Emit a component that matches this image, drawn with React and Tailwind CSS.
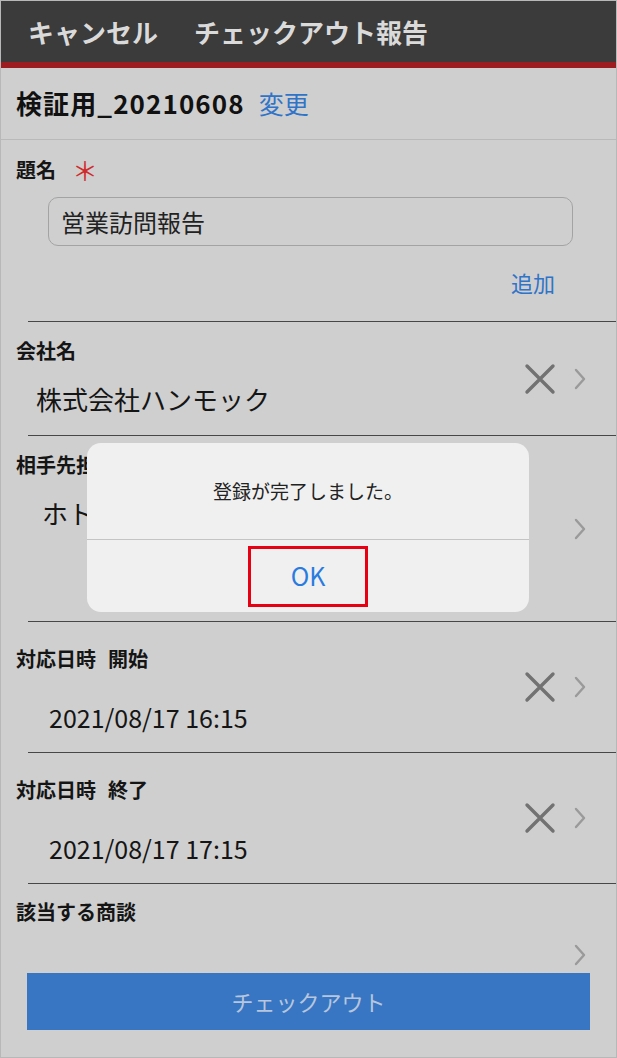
const FONT = { fontFamily: '"Noto Sans CJK JP", "Noto Sans", sans-serif' };

const ClearIcon = () => (
  <svg width="32" height="32" viewBox="0 0 32 32" className="shrink-0">
    <path d="M3 3 L29 29 M29 3 L3 29" stroke="#727272" strokeWidth="3.4" strokeLinecap="round" />
  </svg>
);

const Chevron = () => (
  <svg width="12" height="22" viewBox="0 0 12 22" className="shrink-0">
    <path d="M2 2 L10 11 L2 20" fill="none" stroke="#9a9a9a" strokeWidth="2.4" strokeLinecap="round" strokeLinejoin="round" />
  </svg>
);

const Divider = () => <div className="ml-[27px] h-px bg-[#474747]" />;

const FieldRow = ({ label, sub, value, valueSize = "text-[26px]", height, pt, gap, valueX, clear = true }) => (
  <div className={`flex items-center ${height}`}>
    <div className={`flex-1 self-start ${pt}`}>
      <p className="pl-[15px] text-[20px] font-bold leading-[26px] text-[#151515]">
        {label}
        {sub && <span className="ml-[12px]">{sub}</span>}
      </p>
      {value && (
        <p className={`${gap} ${valueX} ${valueSize} leading-[32px] text-[#151515]`}>{value}</p>
      )}
    </div>
    <div className="flex items-center gap-[18px] pr-[30px]">
      {clear && <ClearIcon />}
      <Chevron />
    </div>
  </div>
);

const App = () => {
  return (
    <div className="relative h-[1058px] w-[617px] overflow-hidden border border-[#b8b8b8] bg-[#cfcfcf]" style={FONT}>
      <header className="flex h-[61px] items-center gap-[36px] bg-[#3b3b3b] pl-[27px] text-[26px] font-bold text-[#dadada]">
        <span>キャンセル</span>
        <span>チェックアウト報告</span>
      </header>
      <div className="h-[6px] bg-[#9c1c20]" />

      <div className="flex h-[71px] items-start gap-[14px] pl-[15px] pt-[18px]">
        <span className="text-[26px] font-bold leading-[34px] tracking-[1.1px] text-[#111]">検証用_20210608</span>
        <span className="text-[25px] leading-[34px] text-[#2f74c8]">変更</span>
      </div>
      <div className="h-px bg-[#b9b9b9]" />

      <section className="h-[181px] pt-[17px]">
        <div className="flex items-center pl-[15px]">
          <span className="text-[20px] font-bold leading-[26px] text-[#151515]">題名</span>
          <span className="ml-[16px] text-[26px] leading-[26px] text-[#d12a2a]">＊</span>
        </div>
        <div className="ml-[47px] mt-[14px] flex h-[49px] w-[525px] items-center rounded-[10px] border border-[#a3a3a3] pl-[12px] text-[24px] text-[#222]">
          営業訪問報告
        </div>
        <div className="mt-[22px] flex justify-end pr-[61px]">
          <span className="text-[22px] leading-[28px] text-[#2f74c8]">追加</span>
        </div>
      </section>
      <Divider />

      <FieldRow label="会社名" value="株式会社ハンモック" height="h-[113px]" pt="pt-[16px]" gap="mt-[19px]" valueX="pl-[35px]" />
      <Divider />
      <FieldRow label="相手先担当者" value="ホトトギス 太郎" height="h-[185px]" pt="pt-[16px]" gap="mt-[19px]" valueX="pl-[41px]" clear={false} />
      <Divider />
      <FieldRow label="対応日時" sub="開始" value="2021/08/17 16:15" valueSize="text-[25px]" height="h-[130px]" pt="pt-[24px]" gap="mt-[29px]" valueX="pl-[48px]" />
      <Divider />
      <FieldRow label="対応日時" sub="終了" value="2021/08/17 17:15" valueSize="text-[25px]" height="h-[130px]" pt="pt-[24px]" gap="mt-[29px]" valueX="pl-[48px]" />
      <Divider />
      <FieldRow label="該当する商談" height="h-[142px]" pt="pt-[15px]" clear={false} />

      <div className="absolute bottom-[27px] left-[26px] flex h-[57px] w-[563px] items-center justify-center bg-[#3876c3] text-[22px] text-[#b7c6dc]">
        チェックアウト
      </div>

      <div className="absolute left-[86px] top-[442px] w-[442px] overflow-hidden rounded-[14px] bg-[#f0f0f0]">
        <div className="flex h-[96px] items-center justify-center text-[19px] text-[#222]">登録が完了しました。</div>
        <div className="h-px bg-[#c4c4c4]" />
        <div className="flex h-[72px] items-center justify-center">
          <div className="flex h-[61px] w-[120px] items-center justify-center border-[3px] border-[#e60012] text-[25px] text-[#2a7be0]">
            OK
          </div>
        </div>
      </div>
    </div>
  );
};

export default App;
